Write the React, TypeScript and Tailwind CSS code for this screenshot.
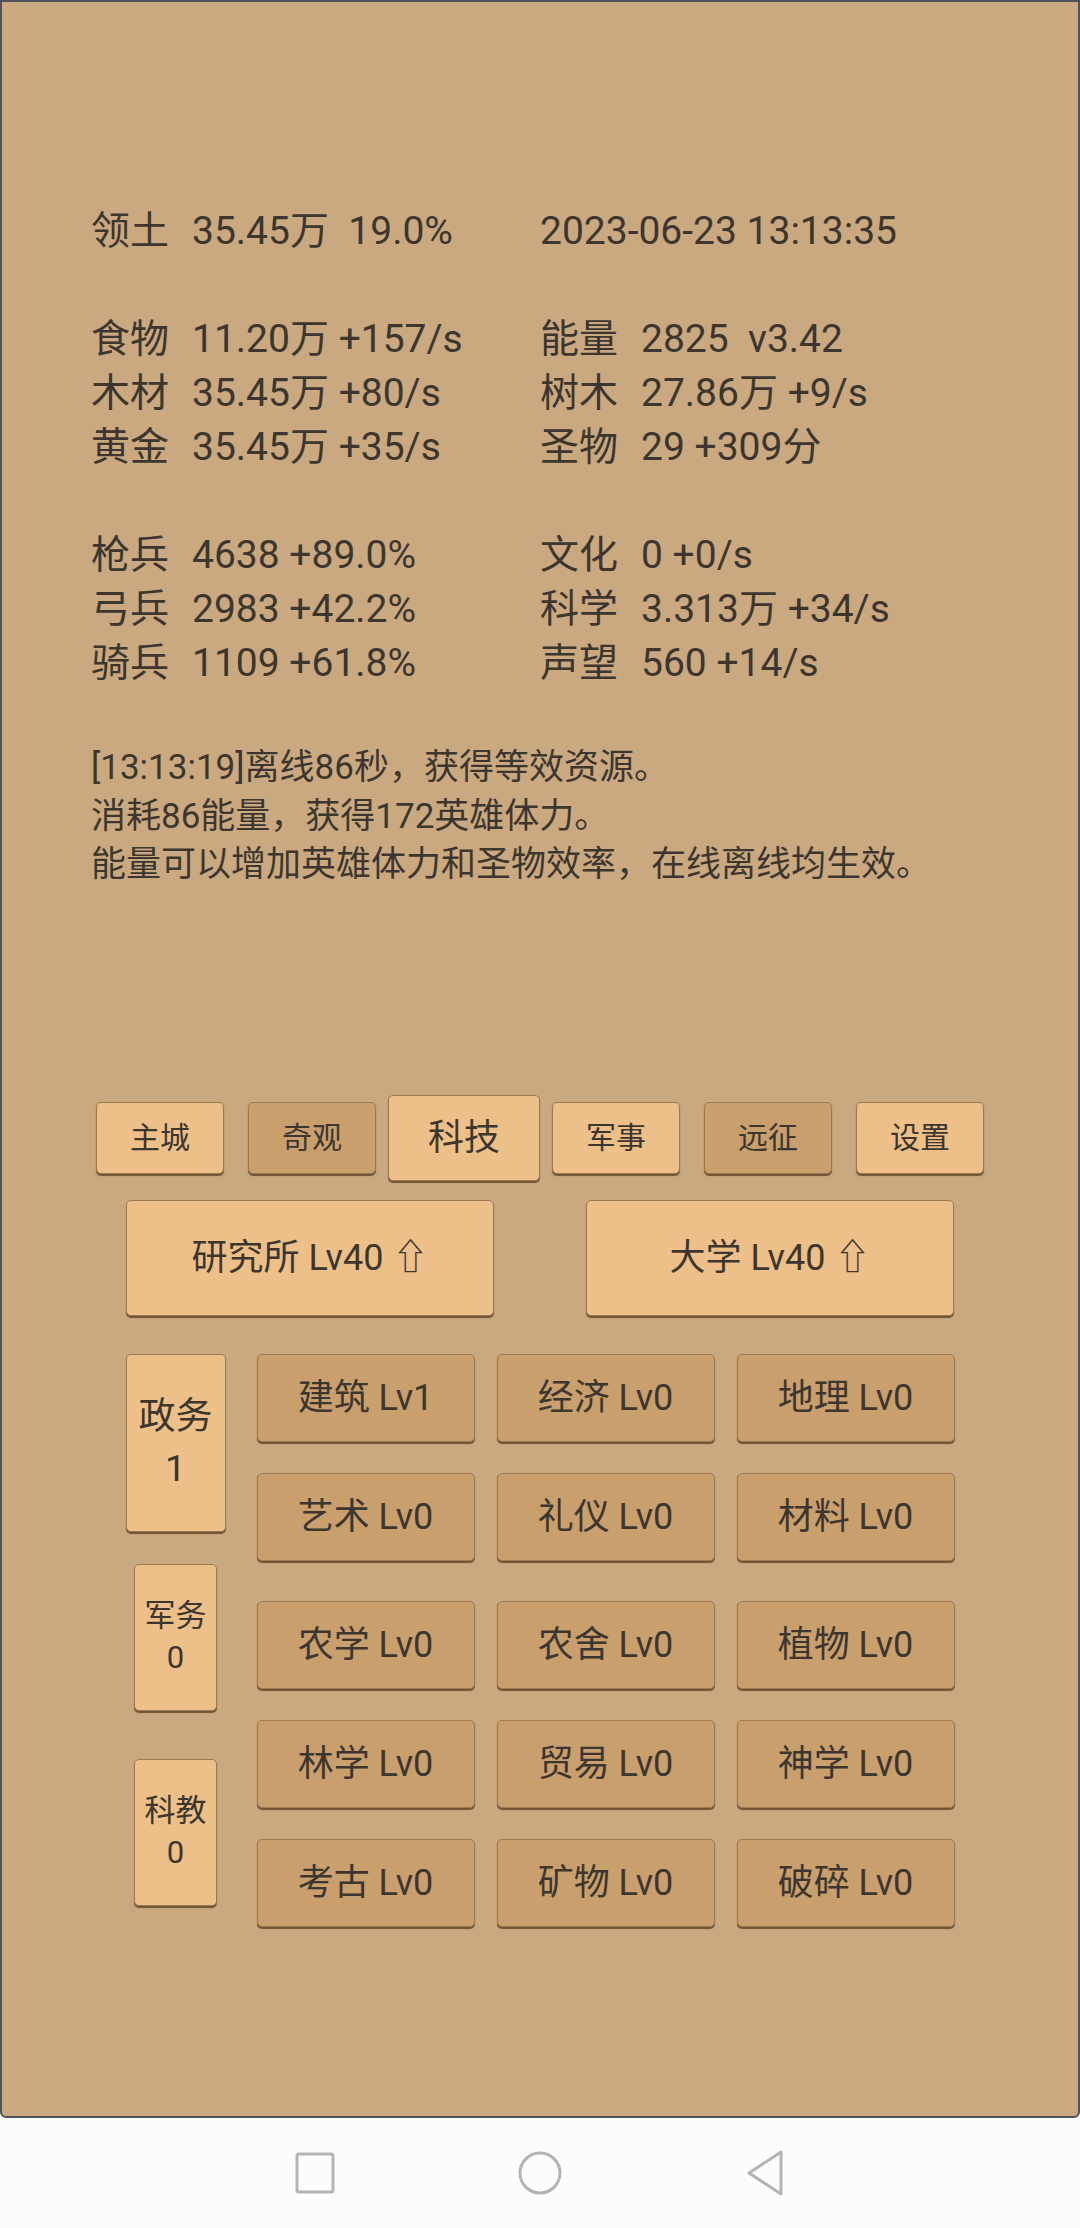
const font = { fontFamily: 'Roboto, "Noto Sans CJK SC", sans-serif' };

const stats: ([string, string] | null)[][] = [
  [['领土', '35.45万  19.0%'], ['', '2023-06-23 13:13:35']],
  [null, null],
  [['食物', '11.20万 +157/s'], ['能量', '2825  v3.42']],
  [['木材', '35.45万 +80/s'], ['树木', '27.86万 +9/s']],
  [['黄金', '35.45万 +35/s'], ['圣物', '29 +309分']],
  [null, null],
  [['枪兵', '4638 +89.0%'], ['文化', '0 +0/s']],
  [['弓兵', '2983 +42.2%'], ['科学', '3.313万 +34/s']],
  [['骑兵', '1109 +61.8%'], ['声望', '560 +14/s']],
];

const tabs = [
  { name: '主城', light: true },
  { name: '奇观', light: false },
  { name: '科技', light: true, active: true },
  { name: '军事', light: true },
  { name: '远征', light: false },
  { name: '设置', light: true },
];

const techRows = [
  ['建筑 Lv1', '经济 Lv0', '地理 Lv0'],
  ['艺术 Lv0', '礼仪 Lv0', '材料 Lv0'],
  ['农学 Lv0', '农舍 Lv0', '植物 Lv0'],
  ['林学 Lv0', '贸易 Lv0', '神学 Lv0'],
  ['考古 Lv0', '矿物 Lv0', '破碎 Lv0'],
];
const rowGaps = ['', 'mt-[31px]', 'mt-[40px]', 'mt-[31px]', 'mt-[31px]'];

const btn = 'rounded-[5px] border border-[#9b7a52] shadow-[0_2px_1px_rgba(80,55,25,0.75)] flex items-center justify-center text-[#3c362f]';

function Cell({ item }: { item: [string, string] | null }) {
  if (!item) return <div className="h-[54px]" />;
  return (
    <div className="h-[54px] leading-[54px] whitespace-pre flex">
      {item[0] && <span className="w-[101px] shrink-0">{item[0]}</span>}
      <span>{item[1]}</span>
    </div>
  );
}

export default function App() {
  return (
    <div className="w-[1080px] h-[2228px] flex flex-col bg-[#fcfcfc]" style={font}>
      <div className="h-[2118px] border-2 border-[#4f525a] rounded-b-[6px] bg-[#caa980] text-[#3c362f] flex flex-col">
        <div className="pt-[202px] pl-[89px] grid grid-cols-[449px_1fr] text-[39px]">
          {stats.map((row, i) => (
            <div key={i} className="contents">
              <Cell item={row[0]} />
              <Cell item={row[1]} />
            </div>
          ))}
        </div>

        <div className="mt-[54px] pl-[89px] text-[35px] leading-[48.5px]">
          <p>[13:13:19]离线86秒，获得等效资源。</p>
          <p>消耗86能量，获得172英雄体力。</p>
          <p>能量可以增加英雄体力和圣物效率，在线离线均生效。</p>
        </div>

        <div className="mt-[205px] h-[86px] flex justify-center items-center">
          {tabs.map((t) => (
            <div key={t.name} className="w-[152px] flex justify-center">
              <div
                className={`${btn} ${t.light ? 'bg-[#ecc088]' : 'bg-[#c99f6d]'} ${
                  t.active ? 'w-[153px] h-[86px] text-[36px]' : 'w-[128px] h-[72px] text-[30px]'
                }`}
              >
                {t.name}
              </div>
            </div>
          ))}
        </div>

        <div className="mt-[19px] flex justify-center gap-[92px]">
          <div className={`${btn} bg-[#ecc088] w-[368px] h-[116px] text-[36px]`}>研究所 Lv40 ⇧</div>
          <div className={`${btn} bg-[#ecc088] w-[368px] h-[116px] text-[36px]`}>大学 Lv40 ⇧</div>
        </div>

        <div className="mt-[38px] flex justify-center gap-[31px]">
          <div className="w-[100px] flex flex-col items-center">
            <div className={`${btn} bg-[#ecc088] w-[100px] h-[178px] flex-col text-[37px] leading-[52px]`}>
              <span>政务</span>
              <span>1</span>
            </div>
            <div className={`${btn} bg-[#ecc088] mt-[32px] w-[83px] h-[147px] flex-col text-[31px] leading-[42px]`}>
              <span>军务</span>
              <span>0</span>
            </div>
            <div className={`${btn} bg-[#ecc088] mt-[48px] w-[83px] h-[147px] flex-col text-[31px] leading-[42px]`}>
              <span>科教</span>
              <span>0</span>
            </div>
          </div>
          <div className="flex flex-col">
            {techRows.map((row, i) => (
              <div key={i} className={`flex gap-[22px] ${rowGaps[i]}`}>
                {row.map((name) => (
                  <div key={name} className={`${btn} bg-[#c99f6d] w-[218px] h-[88px] text-[36px]`}>
                    {name}
                  </div>
                ))}
              </div>
            ))}
          </div>
        </div>
      </div>

      <nav className="h-[110px] flex items-center justify-center">
        <div className="w-[225px] flex justify-center">
          <svg width="40" height="42" viewBox="0 0 40 42" fill="none" stroke="#b4b4b4" strokeWidth="3">
            <rect x="2" y="2" width="36" height="38" rx="2" />
          </svg>
        </div>
        <div className="w-[225px] flex justify-center">
          <svg width="44" height="44" viewBox="0 0 44 44" fill="none" stroke="#b4b4b4" strokeWidth="3">
            <circle cx="22" cy="22" r="20" />
          </svg>
        </div>
        <div className="w-[225px] flex justify-center">
          <svg width="40" height="46" viewBox="0 0 40 46" fill="none" stroke="#b4b4b4" strokeWidth="3" strokeLinejoin="round">
            <path d="M36 2 L4 23 L36 44 Z" />
          </svg>
        </div>
      </nav>
    </div>
  );
}
